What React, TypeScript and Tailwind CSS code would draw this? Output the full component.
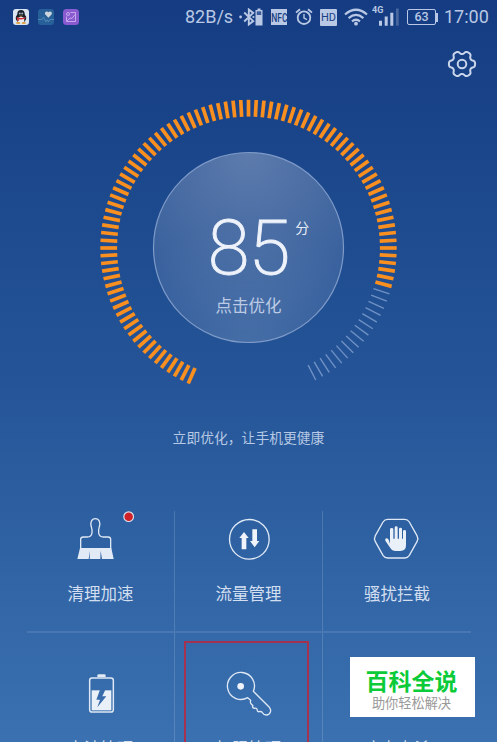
import React, { ReactNode } from "react";

const SCORE_TICKS = 88;
const TOTAL_TICKS = 104;
const START_ANGLE = 204;
const TICK_STEP = 3;

const gearPath = () => {
  const points: string[] = [];
  for (let deg = 0; deg < 360; deg += 3) {
    const a = (deg * Math.PI) / 180;
    const r = 11.4 + 1.75 * Math.tanh(1.6 * (Math.cos(6 * a) + 0.25));
    points.push(
      `${(15 + r * Math.cos(a)).toFixed(2)} ${(15 + r * Math.sin(a)).toFixed(2)}`
    );
  }
  return `M${points.join("L")}Z`;
};

const StatusBar = () => (
  <div className="flex h-[34px] items-center pl-[13px] text-[#b9c8e4]">
    <svg width="16" height="16" viewBox="0 0 16 16">
      <rect width="16" height="16" rx="3" fill="#dbe5f1" />
      <ellipse cx="8" cy="9" rx="5.3" ry="4.6" fill="#17202c" />
      <ellipse cx="8" cy="5.2" rx="3.7" ry="4.2" fill="#17202c" />
      <ellipse cx="8" cy="11" rx="3.3" ry="3.2" fill="#e8edf2" />
      <circle cx="6.8" cy="4.6" r="1" fill="#9fb0bb" />
      <circle cx="9.2" cy="4.6" r="1" fill="#9fb0bb" />
      <path d="M6 6.8h4l-2 1z" fill="#e8a13a" />
      <path d="M3.6 8q4.4 2 8.8 0v1.5Q8 11 5.8 10.2V12H4.5z" fill="#cf3238" />
      <ellipse cx="5.2" cy="14" rx="2.2" ry="1" fill="#e0a13c" />
      <ellipse cx="10.8" cy="14" rx="2.2" ry="1" fill="#e0a13c" />
    </svg>
    <svg className="ml-[9px]" width="16" height="16" viewBox="0 0 16 16">
      <rect width="16" height="16" rx="3" fill="#275f99" />
      <path
        d="M10.4 8.8 7.3 5.6C5.8 3.5 8.5 1.2 10.4 3.2c1.9-2 4.6.3 3.1 2.4z"
        fill="#cdd5dc"
      />
      <path
        d="M0 10.5h4l1.6-2.3 2.3 4.6 1.3-2 1.3 2 1.4-2.3H16"
        fill="none"
        stroke="#5b90bd"
        strokeWidth="0.8"
      />
    </svg>
    <svg className="ml-[9px]" width="16" height="16" viewBox="0 0 16 16">
      <rect width="16" height="16" rx="3.5" fill="#8a5bd0" />
      <g fill="none" stroke="#c9b0ee" strokeWidth="0.9">
        <path d="M7.5 3.5h5v9h-9v-5" />
        <circle cx="5" cy="5" r="1.5" />
        <path d="m4 12 3-3 2 .5 3-4" />
      </g>
    </svg>

    <span className="ml-[106px] w-[53px] font-[Roboto,sans-serif] text-[18px] leading-none whitespace-nowrap">
      82B/s
    </span>

    <svg width="26" height="18" viewBox="0 0 26 18">
      <path
        d="m6.2 4.5 9 8.6-4.4 3.4V1.5l4.4 3.4-9 8.6"
        fill="none"
        stroke="currentColor"
        strokeWidth="1.9"
      />
      <circle cx="2.6" cy="9" r="1.4" fill="currentColor" />
      <circle cx="15.4" cy="9" r="1.1" fill="currentColor" />
      <path d="M19.5 .5h3V2h-3z" fill="currentColor" />
      <path d="M17.5 2h7v15.5h-7z" fill="currentColor" />
      <path d="M18.8 3.3h4.4V7h-4.4z" fill="#3b5c9b" />
    </svg>
    <div className="ml-[7px] flex h-4 w-4 items-center justify-center overflow-hidden bg-[#b9c8e4]">
      <span className="scale-x-[0.65] font-[Roboto,sans-serif] text-[13px] font-medium leading-none text-[#183f84]">
        NFC
      </span>
    </div>
    <svg className="ml-2" width="18" height="18" viewBox="0 0 18 18">
      <g fill="none" stroke="currentColor">
        <circle cx="9" cy="9.7" r="6.3" strokeWidth="1.8" />
        <path d="M9 6v4l3 1.6" strokeWidth="1.4" />
        <path d="M1 4.6 5 1.2M17 4.6l-4-3.4" strokeWidth="1.8" />
      </g>
    </svg>
    <div className="ml-[7px] flex h-[17px] w-[17px] items-center justify-center rounded-[1px] bg-[#b9c8e4]">
      <span className="pt-px font-[Roboto,sans-serif] text-[11px] leading-none text-[#183f84]">
        HD
      </span>
    </div>
    <svg className="ml-[7px]" width="24" height="18" viewBox="0 0 24 18">
      <g fill="none" stroke="currentColor" strokeWidth="2.2">
        <path d="M1 6.5q11-9.5 22 0" />
        <path d="M4.6 10.1q7.4-6.3 14.8 0" />
        <path d="M8 13.4q4-3.3 8 0" />
      </g>
      <circle cx="12" cy="15.7" r="1.9" fill="currentColor" />
    </svg>
    <svg className="ml-1" width="28" height="24" viewBox="0 0 28 24">
      <text
        x="0"
        y="7.7"
        fill="currentColor"
        className="font-[Roboto,sans-serif] text-[9px] font-bold"
      >
        4G
      </text>
      <path
        d="M7 15.7h3v5H7zM12.7 11.5h3v9.2h-3zM18.3 7.7h3v13h-3z"
        fill="currentColor"
      />
      <path d="M24 3.5h2.7v17.2H24z" fill="#4767a1" />
    </svg>
    <div className="ml-[7px] flex items-center">
      <div className="flex h-4 w-[29px] items-center justify-center rounded-[2px] border-[1.5px] border-[#b9c8e4] font-[Roboto,sans-serif] text-[12.5px] font-medium leading-none">
        63
      </div>
      <div className="h-[9px] w-[2px] bg-[#b9c8e4]" />
    </div>
    <span className="ml-[6px] font-[Roboto,sans-serif] text-[18px] leading-none">
      17:00
    </span>
  </div>
);

const Gauge = () => (
  <div className="grid h-[300px] justify-items-center">
    <svg
      className="col-start-1 row-start-1"
      width="300"
      height="300"
      viewBox="0.5 0 300 300"
    >
      <defs>
        <radialGradient id="glowTop" cx="0.5" cy="0" r="0.95">
          <stop offset="0" stopColor="#fff" stopOpacity="0.27" />
          <stop offset="1" stopColor="#fff" stopOpacity="0.04" />
        </radialGradient>
        <radialGradient id="glowBottom" cx="0.5" cy="1.05" r="0.7">
          <stop offset="0" stopColor="#fff" stopOpacity="0.13" />
          <stop offset="1" stopColor="#fff" stopOpacity="0.03" />
        </radialGradient>
      </defs>
      <circle cx="150" cy="149.5" r="95" fill="url(#glowTop)" />
      <circle
        cx="150"
        cy="149.5"
        r="95"
        fill="url(#glowBottom)"
        stroke="#7e9ac8"
        strokeWidth="1.2"
      />
      {Array.from({ length: TOTAL_TICKS }, (_, i) => (
        <line
          key={i}
          x1="150"
          y1="1.8"
          x2="150"
          y2="18.6"
          stroke={i < SCORE_TICKS ? "#f98f1f" : "#6f91c4"}
          strokeWidth={i < SCORE_TICKS ? 3.7 : 1.4}
          transform={`rotate(${START_ANGLE + i * TICK_STEP} 150 150)`}
        />
      ))}
    </svg>
    <div className="col-start-1 row-start-1 flex flex-col items-center pt-[112px]">
      <div className="flex">
        <span className="w-[21px]" />
        <span className="font-[Roboto,sans-serif] text-[76px] font-extralight leading-[76px] tracking-[-1px] text-[#eef2fa] [-webkit-text-stroke:0.9px_#eef2fa]">
          85
        </span>
        <span className="w-[21px] pt-[8px] pl-[6px] text-[14px] leading-[18px] text-[#e6ecf7]">
          分
        </span>
      </div>
      <span className="mt-[7px] text-[16.5px] leading-6 text-[#bccbe5]">
        点击优化
      </span>
    </div>
  </div>
);

const BrushIcon = () => (
  <svg width="68" height="56" viewBox="141 33 204 168">
    <path
      d="M182 146v-28q0-7 8-7h12q12 0 14-12 1-9-2-19c-4-12 0-24 12-24s16 12 12 24q-3 10-2 19 2 12 14 12h14q8 0 8 7v28"
      fill="none"
      stroke="#dfe8f5"
      strokeWidth="4"
    />
    <path
      d="M180 144h94l7 33h-35l-4-25-1 25h-32l1-25-4 25h-34z"
      fill="#e1eaf5"
    />
    <circle cx="326" cy="50" r="14.5" fill="#cf2127" stroke="#dde3ef" strokeWidth="3.5" />
  </svg>
);

const TrafficIcon = () => (
  <svg width="68" height="56" viewBox="135 33 204 168">
    <circle cx="238" cy="118" r="59.5" fill="none" stroke="#dfe8f5" strokeWidth="4" />
    <path d="m222 96 14 18h-7v34h-14v-34h-7z" fill="#f0f4fa" />
    <path d="m254 142-14-19h7V88h14v35h7z" fill="#f0f4fa" />
  </svg>
);

const BlockIcon = () => (
  <svg width="68" height="56" viewBox="129 33 204 168">
    <path
      d="M203 58h51q9 0 14 8l23 41q5 9 0 18l-23 41q-5 8-14 8h-51q-9 0-14-8l-23-41q-5-9 0-18l23-41q5-8 14-8z"
      fill="none"
      stroke="#dfe8f5"
      strokeWidth="4"
    />
    <path
      d="M210 131V88q0-4 5-4t5 4v28h4V83q0-4 4.5-4t4.5 4v33h4V87q0-4 4.5-4t4.5 4v29h3V94q0-4 4.5-4t4.5 4v42q0 17-17 17h-14q-11 0-16-9l-15-22q-2-6 3-7 4 0 7 4z"
      fill="#eaf0f8"
    />
  </svg>
);

const BatteryIcon = () => (
  <svg width="68" height="56" viewBox="141 108 204 168">
    <path d="M232 141v-4q0-4 4-4h17q4 0 4 4v4z" fill="#e1eaf5" />
    <rect
      x="209"
      y="144"
      width="71"
      height="102"
      rx="7"
      fill="none"
      stroke="#dfe8f5"
      strokeWidth="4.5"
    />
    <path d="M215 181h59v60h-59z" fill="#eaf0f8" />
    <path d="m240 179-11 30h11l-8 23 27-33h-12l9-20z" fill="#386bab" />
  </svg>
);

const KeyIcon = () => (
  <svg width="68" height="56" viewBox="135 108 204 168">
    <path
      d="M250 184A40.500 40.500 0 1 0 233 203L242 211Q240 218 243 221L249 227Q246 231 250 234L254 235Q261 233 262 241Q262 246 268 245Q275 243 278 249Q281 255 289 255Q298 255 301 247Q304 239 298 232Z"
      fill="none"
      stroke="#dfe8f5"
      strokeWidth="4"
      strokeLinejoin="round"
    />
    <circle cx="212" cy="169" r="10" fill="#f0f4fa" />
  </svg>
);

interface TileProps {
  label: string;
  icon?: ReactNode;
  className?: string;
  children?: ReactNode;
}

const Tile = (props: TileProps) => (
  <div
    className={`relative flex flex-col items-center border-white/15 ${
      props.className ?? ""
    }`}
  >
    <div className="h-14 w-[68px]">{props.icon}</div>
    <p className="mt-[14px] text-[16.5px] leading-6 text-[#d3dff0]">
      {props.label}
    </p>
    {props.children}
  </div>
);

const App = () => {
  return (
    <div className="h-[742px] w-[500px] overflow-hidden bg-white font-['Noto_Sans_CJK_SC',sans-serif]">
      <div className="relative h-[742px] w-[497px] overflow-hidden bg-linear-to-b from-[#153c82] via-[#245497] to-[#3b71b0]">
        <StatusBar />
        <div className="flex h-16 justify-end pt-[15px] pr-5">
          <svg width="30" height="30" viewBox="0 0 30 30">
            <path
              d={gearPath()}
              fill="none"
              stroke="#c9d5ea"
              strokeWidth="2"
              strokeLinejoin="round"
            />
            <circle cx="15" cy="15" r="4.3" fill="none" stroke="#c9d5ea" strokeWidth="2" />
          </svg>
        </div>
        <Gauge />
        <p className="mt-[27px] text-center text-[13.8px] leading-6 text-[#b7c9e4]">
          立即优化，让手机更健康
        </p>

        <div className="mt-[62px] ml-[27px] w-[444px]">
          <div className="grid h-[120px] grid-cols-3">
            <Tile label="清理加速" icon={<BrushIcon />} className="border-r" />
            <Tile label="流量管理" icon={<TrafficIcon />} className="border-r" />
            <Tile label="骚扰拦截" icon={<BlockIcon />} />
          </div>
          <div className="h-[2px] bg-white/10" />
          <div className="grid h-[160px] grid-cols-3">
            <Tile label="电池管理" icon={<BatteryIcon />} className="border-r pt-[33px]" />
            <Tile label="权限管理" icon={<KeyIcon />} className="border-r pt-[33px]">
              <div className="absolute top-2 left-[9px] h-[160px] w-[125px] border-2 border-[#b8283f]/85" />
            </Tile>
            <Tile label="病毒查杀" className="pt-[33px]" />
          </div>
        </div>

        <div className="absolute top-[657px] left-[350px] flex h-[60px] w-[125px] flex-col items-center bg-white pt-[9px] pr-[2px]">
          <p className="text-[23px] font-bold leading-[28px] text-[#0bcb38]">
            百科全说
          </p>
          <p className="mt-px text-[13.2px] leading-4 text-[#999999]">
            助你轻松解决
          </p>
        </div>
      </div>
    </div>
  );
};

export default App;
